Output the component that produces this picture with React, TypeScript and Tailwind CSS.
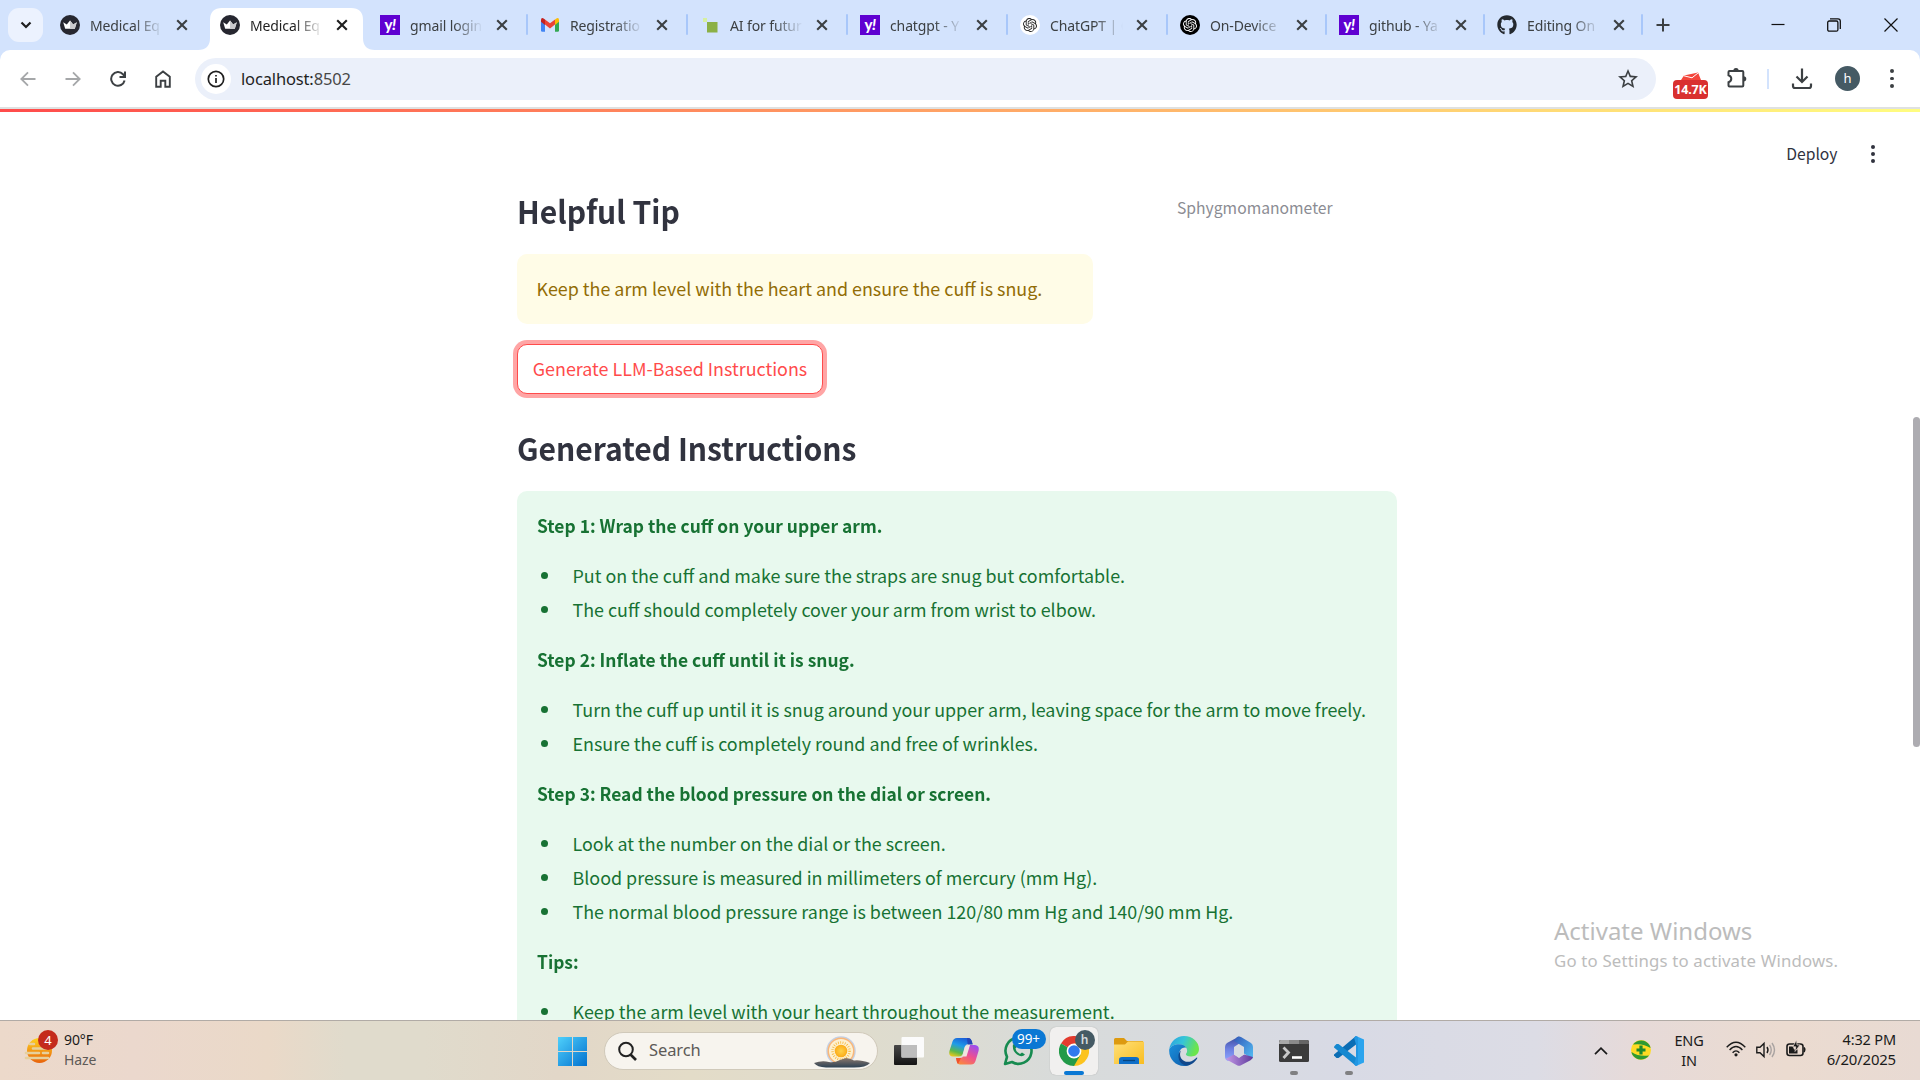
import React from "react";
import { SiOpenai } from "react-icons/si";
import { FaGithub } from "react-icons/fa";
import { MdStarBorder } from "react-icons/md";

const WIN = "font-['Noto_Sans',sans-serif]";
const SRC = "font-['Noto_Sans_CJK_SC',sans-serif]";

function Streamlit() {
  return (
    <svg width="20" height="20" viewBox="0 0 20 20">
      <circle cx="10" cy="10" r="10" fill="#262730" />
      <path d="M3.2 7.2 6.8 9.4 10 5.6l3.2 3.8 3.6-2.2-2 6.6H5.2z" fill="#fff" />
      <path d="M10 5.6 13.2 9.4 16.8 7.2l-2 6.6H10z" fill="#c9c9cc" />
    </svg>
  );
}

function Yahoo() {
  return (
    <div className="flex h-5 w-5 items-center justify-center bg-[#5f01d1] font-['Lato',sans-serif] text-[15px] leading-[20px] font-black tracking-[-0.5px] text-white">
      <span className="-mt-[3px]">y</span>
      <span className="-mt-[3px] italic">!</span>
    </div>
  );
}

function Gmail() {
  return (
    <svg width="20" height="20" viewBox="0 0 20 20">
      <path d="M1 5v10.500q0 1.300 1.300 1.300H5V8z" fill="#4285f4" />
      <path d="M19 5v10.500q0 1.300-1.300 1.300H15V8z" fill="#34a853" />
      <path d="M15 4.400 16.400 3.400Q19 2.400 19 5v1.800L15 10z" fill="#fbbc04" />
      <path d="M5 4.400 3.600 3.400Q1 2.400 1 5v1.800L5 10z" fill="#c5221f" />
      <path d="M5 4.400 10 8.200 15 4.400V9.600L10 13.500 5 9.600z" fill="#ea4335" />
    </svg>
  );
}

function Squares() {
  return (
    <svg width="20" height="20" viewBox="0 0 20 20">
      <rect x="3" y="3" width="4" height="4" fill="#d6f0a0" />
      <rect x="7" y="7" width="10.500" height="10.500" fill="#8bb046" />
    </svg>
  );
}

function GptLight() {
  return (
    <div className="flex h-5 w-5 items-center justify-center rounded-full bg-white text-[#222]">
      <SiOpenai size={14} />
    </div>
  );
}

function GptDark() {
  return (
    <div className="flex h-5 w-5 items-center justify-center rounded-full bg-black text-white">
      <SiOpenai size={14} />
    </div>
  );
}

function Github() {
  return <FaGithub size={20} color="#24292f" />;
}

type TabInfo = { icon: React.ReactNode; title: string; active?: boolean; sep?: boolean; width: string };

const tabs: TabInfo[] = [
  { icon: <Streamlit />, title: "Medical Eq", width: "w-[160px]" },
  { icon: <Streamlit />, title: "Medical Eq", active: true, width: "w-[160px]" },
  { icon: <Yahoo />, title: "gmail login", sep: true, width: "w-[160px]" },
  { icon: <Gmail />, title: "Registratio", sep: true, width: "w-[160px]" },
  { icon: <Squares />, title: "AI for futur", sep: true, width: "w-[160px]" },
  { icon: <Yahoo />, title: "chatgpt - Y", sep: true, width: "w-[160px]" },
  { icon: <GptLight />, title: "ChatGPT | C", sep: true, width: "w-[160px]" },
  { icon: <GptDark />, title: "On-Device", sep: true, width: "w-[159px]" },
  { icon: <Yahoo />, title: "github - Ya", sep: true, width: "w-[158px]" },
  { icon: <Github />, title: "Editing On", sep: true, width: "w-[158px]" },
];

function Cross({ color }: { color: string }) {
  return (
    <svg width="12" height="12" viewBox="0 0 12 12" className="shrink-0" stroke={color} strokeWidth="2.100">
      <path d="M1.200 1.200l9.600 9.600M10.800 1.200l-9.600 9.600" />
    </svg>
  );
}

function Tab({ t }: { t: TabInfo }) {
  return (
    <div className={`relative flex h-[50px] shrink-0 items-center pl-[10px] ${t.width}`}>
      {t.active && (
        <div className="absolute -left-[12px] top-[8px] h-[42px] w-[177px]">
          <svg width="177" height="42" viewBox="0 0 177 42">
            <path d="M0 42Q12 42 12 30V12Q12 0 24 0H153Q165 0 165 12V30Q165 42 177 42z" fill="#fff" />
          </svg>
        </div>
      )}
      <div className="relative h-5 w-5 shrink-0">{t.icon}</div>
      <div
        className={`relative mt-[2px] ml-[10px] w-[73px] text-[14px] leading-[22px] tracking-[-0.120px] whitespace-nowrap [mask-image:linear-gradient(to_right,#000_60%,transparent_100%)] ${t.active ? "text-[#1f1f1f]" : "text-[#3c4043]"}`}
      >
        {t.title}
      </div>
      <div className="relative ml-[13px]">
        <Cross color={t.active ? "#1f1f1f" : "#3c4043"} />
      </div>
      {t.sep && <div className="absolute top-[14px] right-[2px] h-[21px] w-[2.500px] rounded bg-[#a8c7fa]" />}
    </div>
  );
}

function TabStrip() {
  return (
    <div className="flex h-[50px] items-center bg-[#d3e3fd]">
      <div className="ml-[8px] mr-[7px] flex h-[34px] w-[35px] items-center justify-center rounded-[11px] bg-[#ecf2fe]">
        <svg width="12" height="8" viewBox="0 0 12 8" fill="none" stroke="#1f1f1f" strokeWidth="2.200">
          <path d="M1.500 1.500 6 6l4.500-4.500" />
        </svg>
      </div>
      {tabs.map((t, i) => (
        <Tab key={i} t={t} />
      ))}
      <svg width="14" height="14" viewBox="0 0 14 14" className="ml-[11px]" stroke="#3c4043" strokeWidth="2">
        <path d="M7 .5v13M.5 7h13" />
      </svg>
      <div className="mr-[22px] ml-auto flex h-[48px] items-center">
        <svg width="14" height="14" viewBox="0 0 14 14" stroke="#111" strokeWidth="1.200">
          <path d="M.5 6.500h13" />
        </svg>
        <svg width="14" height="14" viewBox="0 0 14 14" fill="none" stroke="#111" strokeWidth="1.300" className="mr-[43px] ml-[42px]">
          <rect x=".7" y="3" width="10.200" height="10.200" rx="1.500" />
          <path d="M3 .8h8q2.300 0 2.300 2.300V11" />
        </svg>
        <svg width="14" height="14" viewBox="0 0 14 14" stroke="#111" strokeWidth="1.200">
          <path d="M.5.500l13 13M13.500.500l-13 13" />
        </svg>
      </div>
    </div>
  );
}

function Toolbar() {
  return (
    <div className="bg-[#d3e3fd]">
      <div className="flex h-[57px] items-center rounded-t-[10px] bg-white">
        <div className="ml-[20px] flex items-center gap-[29px]">
          <svg width="16" height="16" viewBox="0 0 16 16" fill="none" stroke="#a5a7a9" strokeWidth="1.800">
            <path d="M15.500 8H1.500M8 1.300 1.300 8 8 14.700" />
          </svg>
          <svg width="16" height="16" viewBox="0 0 16 16" fill="none" stroke="#a5a7a9" strokeWidth="1.800">
            <path d="M.5 8h14M8 1.300 14.700 8 8 14.700" />
          </svg>
          <svg width="16" height="16" viewBox="0 0 16 16" fill="none" stroke="#3c4043" strokeWidth="2">
            <path d="M14.600 9.500A6.800 6.800 0 1 1 13 3.300L14.500 5" />
            <path d="M15 .5V6H9.500" />
          </svg>
          <svg width="16" height="18" viewBox="0 0 16 18" fill="none" stroke="#3c4043" strokeWidth="1.900">
            <path d="M1.200 6.800 8 1.400l6.800 5.400V16.800H10.300V10.800H5.700V16.800H1.200z" />
          </svg>
        </div>
        <div className="ml-[24px] flex h-[42px] w-[1461px] items-center rounded-full bg-[#ebf0fa]">
          <div className="ml-[6px] flex h-[30px] w-[30px] items-center justify-center rounded-full bg-white">
            <svg width="18" height="18" viewBox="0 0 18 18" fill="none" stroke="#1f1f1f" strokeWidth="1.700">
              <circle cx="9" cy="9" r="7.700" />
              <path d="M9 8v5M9 4.900v1.700" />
            </svg>
          </div>
          <div className="mt-[2px] ml-[10px] text-[16.500px] tracking-[-0.150px] text-[#1f1f1f]">
            localhost:<span className="text-[#474747]">8502</span>
          </div>
          <MdStarBorder size={24} color="#3c4043" className="mr-[16px] ml-auto" />
        </div>
        <div className="ml-[17px] flex h-[50px] w-[35px] flex-col items-center pt-[18px]">
          <svg width="20" height="8" viewBox="0 0 20 8" className="shrink-0">
            <path d="M0 8 3 3.500 17 .5 20 8z" fill="#f4463c" />
            <path d="M3 3.800l8 2L17 1" stroke="#fff" fill="none" />
          </svg>
          <div className="h-[19px] w-[35px] shrink-0 rounded-[4px] bg-[#d93030] text-center text-[12.500px] leading-[19px] font-bold tracking-[-0.200px] text-white">
            14.7K
          </div>
        </div>
        <svg width="22" height="22" viewBox="0 0 22 22" fill="none" className="mb-[1px] ml-[18px]">
          <path
            d="M3.500 4H16.300Q17.300 4 17.300 5V18.500Q17.300 19.500 16.300 19.500H3.500Q2.500 19.500 2.500 18.500V15.300Q5.300 14.300 5.300 11.800 5.300 9.200 2.500 8.200V5Q2.500 4 3.500 4z"
            stroke="#3c4043"
            strokeWidth="2"
          />
          <path d="M7.300 4Q7.300 1 10 1T12.700 4zM17.500 9.200Q20.300 9.200 20.300 11.800T17.500 14.400z" fill="#3c4043" />
        </svg>
        <div className="ml-[19px] h-[20px] w-[2px] bg-[#d3e3fd]" />
        <svg width="22" height="22" viewBox="0 0 22 22" fill="none" stroke="#3c4043" strokeWidth="2.200" className="ml-[22px]">
          <path d="M11 .5v13M5.500 8.500 11 14l5.500-5.500M2 15.500V18q0 2 2 2h14q2 0 2-2v-2.500" />
        </svg>
        <div className="ml-[22px] flex h-[25px] w-[25px] items-center justify-center rounded-full bg-[#455a64] text-[13px] leading-[25px] text-white">
          h
        </div>
        <div className="ml-[30px] flex flex-col gap-[3.500px]">
          <div className="h-[3.700px] w-[3.700px] rounded-full bg-[#3c4043]" />
          <div className="h-[3.700px] w-[3.700px] rounded-full bg-[#3c4043]" />
          <div className="h-[3.700px] w-[3.700px] rounded-full bg-[#3c4043]" />
        </div>
      </div>
    </div>
  );
}

const sections: { head: string; items: string[] }[] = [
  {
    head: "Step 1: Wrap the cuff on your upper arm.",
    items: [
      "Put on the cuff and make sure the straps are snug but comfortable.",
      "The cuff should completely cover your arm from wrist to elbow.",
    ],
  },
  {
    head: "Step 2: Inflate the cuff until it is snug.",
    items: [
      "Turn the cuff up until it is snug around your upper arm, leaving space for the arm to move freely.",
      "Ensure the cuff is completely round and free of wrinkles.",
    ],
  },
  {
    head: "Step 3: Read the blood pressure on the dial or screen.",
    items: [
      "Look at the number on the dial or the screen.",
      "Blood pressure is measured in millimeters of mercury (mm Hg).",
      "The normal blood pressure range is between 120/80 mm Hg and 140/90 mm Hg.",
    ],
  },
  {
    head: "Tips:",
    items: ["Keep the arm level with your heart throughout the measurement."],
  },
];

function Page() {
  return (
    <main className={`relative flex h-[908px] flex-col overflow-hidden bg-white text-[#31333f] ${SRC}`}>
      <div className="flex h-[84px] shrink-0 items-center justify-end pr-[45px]">
        <span className="text-[15.700px]">Deploy</span>
        <div className="ml-[33px] flex flex-col gap-[2.500px]">
          <div className="h-[4.500px] w-[4.500px] rounded-full bg-[#31333f]" />
          <div className="h-[4.500px] w-[4.500px] rounded-full bg-[#31333f]" />
          <div className="h-[4.500px] w-[4.500px] rounded-full bg-[#31333f]" />
        </div>
      </div>
      <div className="ml-[517px] w-[880px] shrink-0">
        <div className="flex h-[58px]">
          <h2 className="-mt-[2px] flex h-[34px] w-[660px] origin-left scale-x-[0.967] items-center text-[31.100px] leading-[34px] font-bold">
            Helpful Tip
          </h2>
          <span className="h-[24px] text-[15.700px] leading-[24px] text-[#8b8c93]">Sphygmomanometer</span>
        </div>
        <div className="flex h-[70px] w-[576px] items-center rounded-[10px] bg-[#fffce7] pb-[1px] pl-[19.500px] text-[17.900px] text-[#926c05]">
          Keep the arm level with the heart and ensure the cuff is snug.
        </div>
        <button className="mt-[20px] flex h-[50px] w-[306px] items-center justify-center rounded-[10px] border border-[#ff4b4b] bg-white pb-[2px] text-[17.900px] text-[#ff4b4b] shadow-[0_0_0_4px_#ffa5a5]">
          Generate LLM-Based Instructions
        </button>
        <h2 className="mt-[35px] flex h-[38px] origin-left scale-x-[0.967] items-center text-[31.100px] leading-[38px] font-bold">
          Generated Instructions
        </h2>
        <div className="mt-[24px] flex h-[600px] flex-col gap-[17px] rounded-[10px] bg-[#e8f9ee] pt-[18px] pl-[19.500px] text-[17.900px] whitespace-nowrap text-[#177233]">
          {sections.map((s) => (
            <React.Fragment key={s.head}>
              <p className="h-[32px] origin-left scale-x-[0.974] leading-[32px] font-bold">{s.head}</p>
              <ul>
                {s.items.map((it) => (
                  <li key={it} className="flex h-[34px] items-center">
                    <span className="mt-[1px] mr-[24.500px] ml-[4px] h-[7.500px] w-[7.500px] rounded-full bg-[#177233]" />
                    <span className="leading-[34px]">{it}</span>
                  </li>
                ))}
              </ul>
            </React.Fragment>
          ))}
        </div>
      </div>
      <div className="absolute top-[305px] right-0 h-[330px] w-[7px] rounded-[4px] bg-[#adacb1]" />
      <div className={`absolute top-[802px] left-[1554px] whitespace-nowrap text-[#bcbcbc] ${WIN}`}>
        <div className="text-[24px] leading-[34px]">Activate Windows</div>
        <div className="mt-[1px] text-[16.800px] leading-[24px] tracking-[0.180px]">Go to Settings to activate Windows.</div>
      </div>
    </main>
  );
}

function Slot({ children, active, dot }: { children: React.ReactNode; active?: boolean; dot?: boolean }) {
  return (
    <div className="flex w-[55px] shrink-0 justify-center">
      <div className={`relative flex h-[48px] w-[48px] items-center justify-center rounded-[6px] ${active ? "bg-[#f1f0ef] shadow-[0_0_1px_#999]" : ""}`}>
        {children}
        {active && <div className="absolute bottom-0 h-[4px] w-[20px] rounded-full bg-[#0a78d4]" />}
        {dot && <div className="absolute bottom-0 h-[4px] w-[8px] rounded-full bg-[#808082]" />}
      </div>
    </div>
  );
}

function Taskbar() {
  return (
    <footer
      className={`flex h-[60px] items-center border-t border-[#b1aba6] bg-[linear-gradient(90deg,#ecd9ca_0%,#ebd8cd_7%,#ead9c8_14%,#e0dbcc_18%,#e0dbcc_22%,#e2d7c8_29%,#e3dcc8_36%,#dedccf_47%,#d8dbda_55%,#d8dae5_70%,#dcdce5_80%,#e6dad9_85%,#ebdbd0_93%,#e8dad3_100%)] ${WIN}`}
    >
      <div className="flex w-[557px] items-center">
        <div className="relative -mt-[2px] ml-[24px] h-[36px] w-[34px]">
          <svg width="30" height="30" viewBox="0 0 30 30" className="mt-[6px]">
            <defs>
              <linearGradient id="sun" x1="0" y1="0" x2="0" y2="1">
                <stop offset="0" stopColor="#ffd21f" />
                <stop offset="1" stopColor="#e8630c" />
              </linearGradient>
            </defs>
            <circle cx="15.500" cy="12.500" r="12.500" fill="url(#sun)" />
            <path d="M6 6h4M9 10.500h14M2 15h13M19 15h5M2 20h22" stroke="#e6d09c" strokeWidth="2.600" strokeLinecap="round" />
          </svg>
          <div className="absolute -top-[2px] left-[14px] h-[20px] w-[20px] rounded-full bg-[#c42b1c] text-center text-[13px] leading-[20px] text-white">
            4
          </div>
        </div>
        <div className="-mt-[2px] ml-[6px] text-[14px] leading-[20px] tracking-[-0.100px]">
          <div className="text-[#1b1b1b]">90°F</div>
          <div className="text-[#5e5a57]">Haze</div>
        </div>
      </div>
      <svg width="30" height="30" viewBox="0 0 30 30" className="shrink-0">
        <defs>
          <linearGradient id="win" x1="0" y1="0" x2="1" y2="1">
            <stop offset="0" stopColor="#4fd0fb" />
            <stop offset="1" stopColor="#0271cf" />
          </linearGradient>
        </defs>
        <path d="M1 1h14v14H1zM16 1h14v14H16zM1 16h14v14H1zM16 16h14v14H16z" fill="url(#win)" />
      </svg>
      <div className="ml-[17px] flex h-[38px] w-[274px] shrink-0 items-center rounded-full border border-[#d0c9ba] bg-[#f7f4ee]">
        <svg width="20" height="20" viewBox="0 0 20 20" fill="none" stroke="#222" strokeWidth="2" className="ml-[12px]">
          <circle cx="9" cy="8.500" r="6.800" />
          <path d="M13.500 13.500 19 19" strokeWidth="2.600" />
        </svg>
        <span className="ml-[12px] text-[16.500px] tracking-[-0.100px] text-[#5d5a57]">Search</span>
        <svg width="56" height="34" viewBox="0 0 56 34" className="mr-[7px] ml-auto">
          <defs>
            <radialGradient id="glow">
              <stop offset="0" stopColor="#ffd34a" />
              <stop offset="1" stopColor="#fbab18" />
            </radialGradient>
            <linearGradient id="hill" x1="0" y1="0" x2="0" y2="1">
              <stop offset="0" stopColor="#8a776c" />
              <stop offset="1" stopColor="#2d4254" />
            </linearGradient>
          </defs>
          <circle cx="27" cy="17" r="14" fill="#fdf0d0" stroke="#c3d0e6" strokeWidth="1.500" />
          <circle cx="27" cy="17" r="12.800" fill="none" stroke="#f8b67a" strokeWidth="1.500" />
          <circle cx="27" cy="17" r="8.500" fill="none" stroke="#f5b83d" strokeWidth="2.500" strokeDasharray="0.800 1.500" />
          <circle cx="27" cy="17" r="6.300" fill="url(#glow)" />
          <path d="M0 29Q8 26 15 28 20 29 26 26L32 24Q36 24 40 26.500 46 25.500 56 29 52 33.500 40 33.500H12Q3 33 0 29z" fill="url(#hill)" />
        </svg>
      </div>
      <div className="ml-[3px] flex">
        <Slot>
          <svg width="30" height="30" viewBox="0 0 30 30">
            <defs>
              <linearGradient id="tv" x1="0" y1="0" x2="0" y2="1">
                <stop offset="0" stopColor="#484848" />
                <stop offset="1" stopColor="#141414" />
              </linearGradient>
            </defs>
            <rect x="0" y="9" width="23" height="20" rx="1" fill="url(#tv)" />
            <rect x="7.500" y="1" width="22.500" height="20.500" rx="1" fill="#fbfbfb" />
            <rect x="7.500" y="9" width="15.500" height="12.500" fill="#bdbdbd" />
          </svg>
        </Slot>
        <Slot>
          <svg width="30" height="30" viewBox="0 0 30 30">
            <defs>
              <linearGradient id="cp1" x1="0.600" y1="0" x2="0.200" y2="1">
                <stop offset="0" stopColor="#1a5fd8" />
                <stop offset="0.400" stopColor="#1f9ce8" />
                <stop offset="0.750" stopColor="#5cb84a" />
                <stop offset="1" stopColor="#e8c81c" />
              </linearGradient>
              <linearGradient id="cp2" x1="0.800" y1="0" x2="0.200" y2="1">
                <stop offset="0" stopColor="#9a4df0" />
                <stop offset="0.500" stopColor="#ee5090" />
                <stop offset="1" stopColor="#fb8a3c" />
              </linearGradient>
            </defs>
            <path d="M8 2h11q2.500 0 3.500 3l1 3h-4q-3 0-4 3.500l-1.800 6.500q-1 2.500-3.700 2.500H4Q-1 20.500.6 14.500L3.500 5.500Q4.600 2 8 2z" fill="url(#cp1)" />
            <path d="M22 28.500H11q-2.500 0-3.200-3L7 22h4q3 0 4-3.500l1.800-6.500q1-3 3.700-3H26q5 .5 3.400 6.500l-2.900 9.500Q25.400 28.500 22 28.500z" fill="url(#cp2)" />
            <path d="M18 2h2q2 .5 2.800 3l.9 3.500h-5z" fill="#2447b8" />
            <path d="M7 22h5l-3 6q-1-1-1.300-3z" fill="#f0502c" />
            <path d="M16 10.500l3-1.500h2l-3.500 11.500h-4z" fill="#f1e5df" />
          </svg>
        </Slot>
        <Slot>
          <svg width="31" height="31" viewBox="0 0 31 31" fill="none" stroke="#178b50" strokeWidth="2.600">
            <path d="M2 29 4 21.800A13 13 0 1 1 9 27z" strokeLinejoin="round" />
            <path d="M10 9.500Q9 16 14 19.500 19 23 22 19.500L19 17.500 17 19Q13 17 12.500 13.500L13.500 12 12 9z" fill="#178b50" stroke="none" />
          </svg>
          <div className="absolute top-[2px] left-[17px] h-[20px] w-[34px] rounded-full bg-[#0a78d4] text-center text-[13.500px] leading-[20px] text-white">
            99+
          </div>
        </Slot>
        <Slot active>
          <svg width="30" height="30" viewBox="0 0 30 30">
            <path d="M15 15 2 7.500A15 15 0 0 1 28 7.500z" fill="#e33b2e" />
            <path d="M15 15V30A15 15 0 0 0 28 7.500H15z" fill="#fcc31e" />
            <path d="M15 15 2 7.500A15 15 0 0 0 15 30L21.500 18.800z" fill="#229a48" />
            <circle cx="15" cy="15" r="7.400" fill="#fff" />
            <circle cx="15" cy="15" r="5.800" fill="#3079ee" />
          </svg>
          <div className="absolute top-[3px] left-[25px] h-[20px] w-[20px] rounded-full bg-[#455a64] text-center text-[12px] leading-[20px] font-semibold text-[#d5dbde]">
            h
          </div>
        </Slot>
        <Slot>
          <svg width="30" height="28" viewBox="0 0 30 28">
            <defs>
              <linearGradient id="fold" x1="0" y1="0" x2="1" y2="1">
                <stop offset="0" stopColor="#ffe07a" />
                <stop offset="1" stopColor="#f9bd20" />
              </linearGradient>
            </defs>
            <path d="M0 2.500Q0 1 1.500 1H10l3 3H29v6H0z" fill="#dd9a10" />
            <path d="M0 7.500H11L14 4.500H29Q30 4.500 30 5.500V27H0z" fill="url(#fold)" />
            <path d="M5 27V22.500Q5 20 8 20H22Q25 20 25 22.500V27z" fill="#0f6fc8" />
            <path d="M9 23.500H21" stroke="#07457f" strokeWidth="1.300" />
          </svg>
        </Slot>
        <Slot>
          <svg width="30" height="30" viewBox="0 0 24 24">
            <defs>
              <linearGradient id="ed1" x1="0" y1="0" x2="1" y2="0.300">
                <stop offset="0" stopColor="#2b9fe0" />
                <stop offset="0.500" stopColor="#35c5d8" />
                <stop offset="1" stopColor="#6be54c" />
              </linearGradient>
              <linearGradient id="ed2" x1="0" y1="0" x2="1" y2="1">
                <stop offset="0" stopColor="#1a90dc" />
                <stop offset="1" stopColor="#0f5aa8" />
              </linearGradient>
            </defs>
            <path d="M.2 10.500C1 4.500 6 0 12 0c7 0 12 5 12 10.300 0 3.800-2.800 6-6.300 6-3 0-4.200-1-4.200-1.800 0-.6 1-1 1-2.800C14.500 9 12 6.500 8 6.500 4.500 6.500 1.500 8 .2 10.500z" fill="url(#ed1)" />
            <path d="M.2 10.500C1.500 8 4.500 6.500 8 6.500c3 0 5 1.300 6 3-3-1-5.800 1.500-5.800 5 0 5 4.500 9 9 8.300C15.500 23.700 14 24 12 24 5 24-.5 18 .2 10.500z" fill="url(#ed2)" />
            <path d="M9.500 11.500c-2.500 6 2.500 10 7 9 2-.4 4-1.700 5.500-3.200.5-.3.800.1.500.6C20.500 21 17.500 23.500 14 23.500 8 23 5.500 15 9.500 11.500z" fill="#10488c" />
          </svg>
        </Slot>
        <Slot>
          <svg width="28" height="30" viewBox="1 0 28 30">
            <defs>
              <linearGradient id="m1" x1="0" y1="0" x2="0" y2="1">
                <stop offset="0" stopColor="#3a4a9c" />
                <stop offset="0.500" stopColor="#6d7fe0" />
                <stop offset="1" stopColor="#8fa6ff" />
              </linearGradient>
              <linearGradient id="m2" x1="0" y1="0" x2="1" y2="1">
                <stop offset="0" stopColor="#3358b8" />
                <stop offset="1" stopColor="#54c0f5" />
              </linearGradient>
              <linearGradient id="m3" x1="0" y1="0" x2="1" y2="0">
                <stop offset="0" stopColor="#c59ae8" />
                <stop offset="1" stopColor="#5e3a9c" />
              </linearGradient>
            </defs>
            <path d="M15 .5 3 7Q1 8.500 1 11v9.500q0 3 3 4.500l6-4V11l9-6z" fill="url(#m1)" />
            <path d="M13 1q2-1 4 0L27 7q2 1.500 2 4v9q0 2-1 3l-8-5.500V11L10 5z" fill="url(#m2)" />
            <path d="M1.500 23 10 18.500l5 3.500 5-3.500L29 21q-.5 2-2.500 3.300L17 29.300q-2 1-4 0z" fill="url(#m3)" />
            <path d="M15 9.500l5 3v6L15 21.500l-5-3v-6z" fill="#d7dbe2" />
          </svg>
        </Slot>
        <Slot dot>
          <svg width="30" height="22" viewBox="0 0 30 22">
            <rect width="30" height="22" rx="1.500" fill="#3b3b3b" />
            <path d="M1.500 0H20V4H0V1.500z" fill="#a8a8a8" />
            <path d="M10 0H20V4H10z" fill="#8a8a8a" />
            <path d="M20 0H28.500L30 1.500V4H20z" fill="#666" />
            <path d="M4.500 7.500 9.500 12.500 4.500 18" stroke="#c8c8c8" strokeWidth="2.800" fill="none" />
            <path d="M13 17.500H23" stroke="#fff" strokeWidth="2.600" />
          </svg>
        </Slot>
        <Slot dot>
          <svg width="30" height="30" viewBox="0 0 30 30">
            <path d="M22 0 30 3.500V26.500L22 30z" fill="#2ba4ee" />
            <path d="M22 0V8.500L4.500 22 2.500 22 0 19.500V18.500z" fill="#0b6db4" />
            <path d="M22 30V21.500L4.500 8 2.500 8 0 10.500V11.500z" fill="#1588d0" />
            <path d="M22 0 24 1V29L22 30 20 28.500 22 21.500V8.500L20 1.500z" fill="#2196e3" />
          </svg>
        </Slot>
      </div>
      <div className="mr-[24px] ml-auto flex items-center text-[14.500px] leading-[20px] tracking-[-0.150px] text-[#1b1b1b]">
        <svg width="14" height="8" viewBox="0 0 14 8" fill="none" stroke="#1b1b1b" strokeWidth="1.700">
          <path d="M1 7.200 7 1.200l6 6" />
        </svg>
        <svg width="20" height="20" viewBox="0 0 20 20" className="-mt-[2px] ml-[23px]">
          <circle cx="10" cy="10" r="10" fill="#ffdb23" />
          <path d="M2 4.500A10 10 0 0 1 18.500 5Q19.500 7 19.500 8 12 3 2 4.500zM18 15.500A10 10 0 0 1 1.500 15Q.5 13 .5 12 8 17 18 15.500z" fill="#2f9a32" />
          <path d="M10 5.500v9M5.500 10h9" stroke="#1f8a2b" strokeWidth="3.200" />
        </svg>
        <div className="-mt-[2px] ml-[23px] w-[30px] text-center">
          <div>ENG</div>
          <div>IN</div>
        </div>
        <svg width="20" height="16" viewBox="0 0 20 16" fill="none" stroke="#1b1b1b" strokeWidth="1.400" className="-mt-[3px] ml-[22px]">
          <path d="M.7 6.200Q10-3.700 19.300 6.200M3.600 9Q10 2 16.400 9M6.600 11.800Q10 8 13.400 11.800" />
          <circle cx="10" cy="13.800" r="1.600" fill="#1b1b1b" stroke="none" />
        </svg>
        <svg width="20" height="18" viewBox="0 0 20 18" fill="none" stroke="#1b1b1b" strokeWidth="1.400" className="-mt-[2px] ml-[10px]">
          <path d="M.8 6.300H4L8 2.500V15.500L4 11.700H.8zM11 6q2 3 0 6" />
          <path d="M13.500 4q3.500 5 0 10M16 2q5 7 0 14" stroke="#a9a3a1" />
        </svg>
        <svg width="20" height="18" viewBox="0 0 20 18" className="-mt-[4px] ml-[10px]">
          <rect x="1" y="4" width="16" height="11.500" rx="2.500" fill="none" stroke="#1b1b1b" strokeWidth="1.600" />
          <path d="M18 7.500q1.500 2 0 4.500" stroke="#1b1b1b" strokeWidth="1.600" fill="none" />
          <path d="M3 6.500h4l1 3h3.500v4H3z" fill="#1b1b1b" />
          <path d="M10.500 0 6.800 6.800h3L9 11.500l5-6.500h-3z" fill="#1b1b1b" stroke="#ead9d2" strokeWidth=".7" />
        </svg>
        <div className="-mt-[3px] ml-[20px] w-[70px] text-right whitespace-nowrap">
          <div>4:32 PM</div>
          <div className="text-[14.900px]">6/20/2025</div>
        </div>
      </div>
    </footer>
  );
}

export default function App() {
  return (
    <div className={`flex h-[1080px] w-[1920px] flex-col overflow-hidden bg-white ${WIN}`}>
      <TabStrip />
      <Toolbar />
      <div className="h-[2px] shrink-0 bg-[#dfe1e1]" />
      <div className="h-[3px] shrink-0 bg-[linear-gradient(90deg,#ff4b4b,#fffd80)]" />
      <Page />
      <Taskbar />
    </div>
  );
}
